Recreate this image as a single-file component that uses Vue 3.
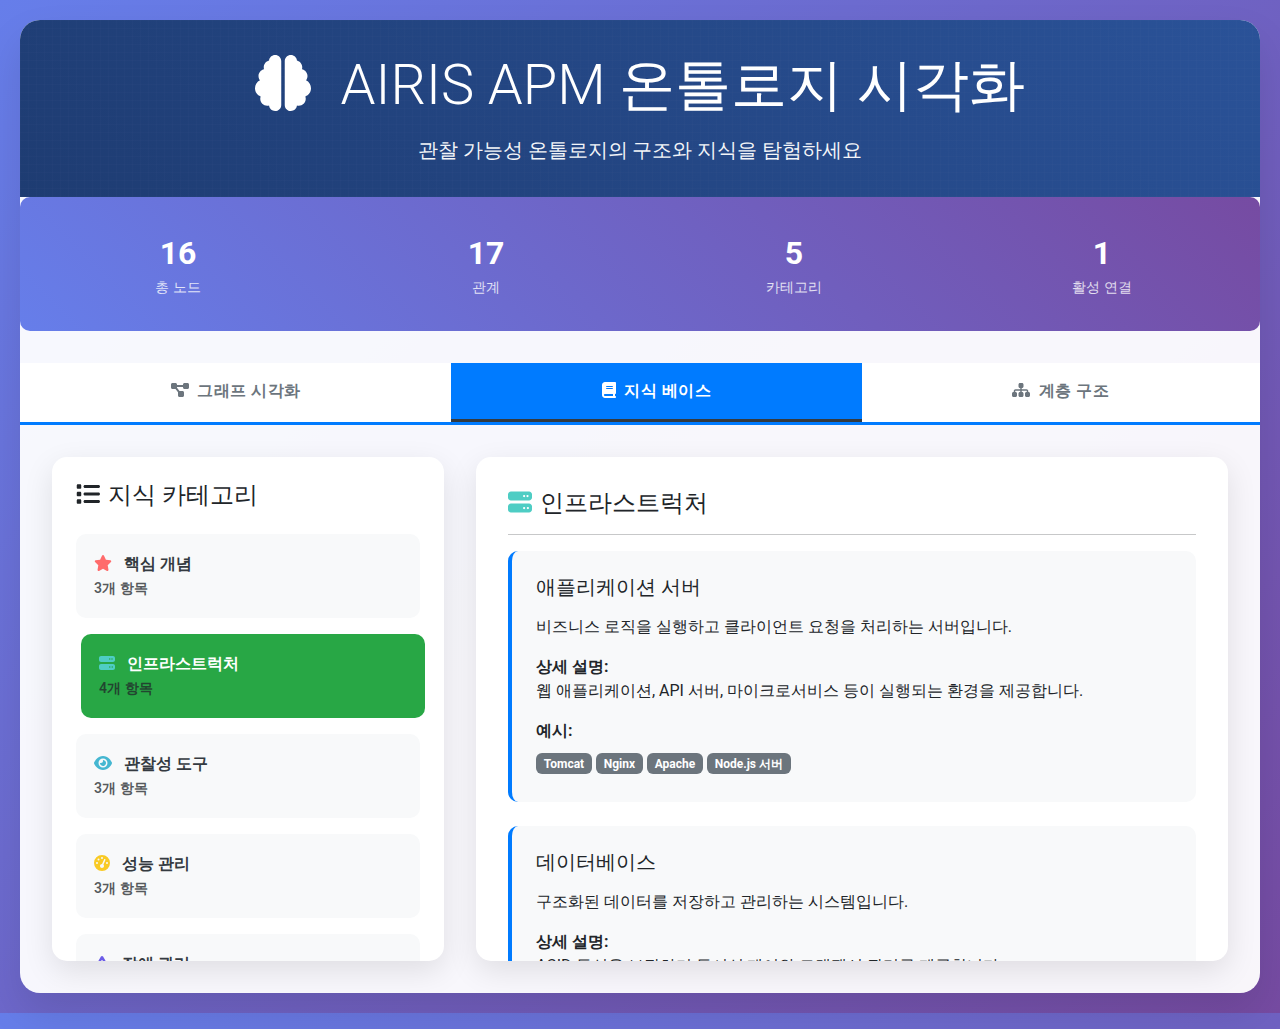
<script setup>
const stats = [
  { value: 16, label: '총 노드' },
  { value: 17, label: '관계' },
  { value: 5, label: '카테고리' },
  { value: 1, label: '활성 연결' },
]

const icons = {
  brain: { w: 512, d: 'M184 0c30.9 0 56 25.1 56 56V456c0 30.9-25.1 56-56 56c-28.9 0-52.7-21.9-55.7-50.1c-5.2 1.4-10.7 2.1-16.3 2.1c-35.3 0-64-28.7-64-64c0-7.4 1.3-14.6 3.6-21.2C21.4 367.4 0 338.2 0 304c0-31.9 18.7-59.5 45.8-72.3C37.1 220.8 32 207 32 192c0-30.7 21.6-56.3 50.4-62.6C80.8 123.9 80 118 80 112c0-29.9 20.6-55.1 48.3-62.1C131.3 21.9 155.1 0 184 0zM328 0c28.9 0 52.6 21.9 55.7 49.9c27.8 7 48.3 32.1 48.3 62.1c0 6-.8 11.9-2.4 17.4c28.8 6.2 50.4 31.9 50.4 62.6c0 15-5.1 28.8-13.8 39.7C493.3 244.5 512 272.1 512 304c0 34.2-21.4 63.4-51.6 74.8c2.3 6.6 3.6 13.8 3.6 21.2c0 35.3-28.7 64-64 64c-5.6 0-11.1-.7-16.3-2.1c-3 28.2-26.8 50.1-55.7 50.1c-30.9 0-56-25.1-56-56V56c0-30.9 25.1-56 56-56z' },
  diagram: { w: 576, d: 'M0 80C0 53.5 21.5 32 48 32h96c26.5 0 48 21.5 48 48V96H384V80c0-26.5 21.5-48 48-48h96c26.5 0 48 21.5 48 48v96c0 26.5-21.5 48-48 48H432c-26.5 0-48-21.5-48-48V160H192v16c0 1.7-.1 3.4-.3 5L272 288h96c26.5 0 48 21.5 48 48v96c0 26.5-21.5 48-48 48H272c-26.5 0-48-21.5-48-48V336c0-1.7 .1-3.4 .3-5L144 224H48c-26.5 0-48-21.5-48-48V80z' },
  book: { w: 448, d: 'M96 0C43 0 0 43 0 96V416c0 53 43 96 96 96H384h32c17.7 0 32-14.3 32-32s-14.3-32-32-32V384c17.7 0 32-14.3 32-32V32c0-17.7-14.3-32-32-32H384 96zm0 384H352v64H96c-17.7 0-32-14.3-32-32s14.3-32 32-32zm32-240c0-8.8 7.2-16 16-16H336c8.8 0 16 7.2 16 16s-7.2 16-16 16H144c-8.8 0-16-7.2-16-16zm16 48H336c8.8 0 16 7.2 16 16s-7.2 16-16 16H144c-8.8 0-16-7.2-16-16s7.2-16 16-16z' },
  sitemap: { w: 576, d: 'M208 80c0-26.5 21.5-48 48-48h64c26.5 0 48 21.5 48 48v64c0 26.5-21.5 48-48 48h-8v40H464c30.9 0 56 25.1 56 56v32h8c26.5 0 48 21.5 48 48v64c0 26.5-21.5 48-48 48H464c-26.5 0-48-21.5-48-48V368c0-26.5 21.5-48 48-48h8V288c0-4.4-3.6-8-8-8H312v40h8c26.5 0 48 21.5 48 48v64c0 26.5-21.5 48-48 48H256c-26.5 0-48-21.5-48-48V368c0-26.5 21.5-48 48-48h8V280H112c-4.4 0-8 3.6-8 8v32h8c26.5 0 48 21.5 48 48v64c0 26.5-21.5 48-48 48H48c-26.5 0-48-21.5-48-48V368c0-26.5 21.5-48 48-48h8V288c0-30.9 25.1-56 56-56H264V192h-8c-26.5 0-48-21.5-48-48V80z' },
  list: { w: 512, d: 'M40 48C26.7 48 16 58.7 16 72v48c0 13.3 10.7 24 24 24H88c13.3 0 24-10.7 24-24V72c0-13.3-10.7-24-24-24H40zM192 64c-17.7 0-32 14.3-32 32s14.3 32 32 32H480c17.7 0 32-14.3 32-32s-14.3-32-32-32H192zm0 160c-17.7 0-32 14.3-32 32s14.3 32 32 32H480c17.7 0 32-14.3 32-32s-14.3-32-32-32H192zm0 160c-17.7 0-32 14.3-32 32s14.3 32 32 32H480c17.7 0 32-14.3 32-32s-14.3-32-32-32H192zM16 232v48c0 13.3 10.7 24 24 24H88c13.3 0 24-10.7 24-24V232c0-13.3-10.7-24-24-24H40c-13.3 0-24 10.7-24 24zM40 368c-13.3 0-24 10.7-24 24v48c0 13.3 10.7 24 24 24H88c13.3 0 24-10.7 24-24V392c0-13.3-10.7-24-24-24H40z' },
  star: { w: 576, d: 'M316.9 18C311.6 7 300.4 0 288.1 0s-23.4 7-28.8 18L195 150.3 51.4 171.5c-12 1.8-22 10.2-25.7 21.7s-.7 24.2 7.9 32.7L137.8 329 113.2 474.7c-2 12 3 24.2 12.9 31.3s23 8 33.8 2.3l128.3-68.5 128.3 68.5c10.8 5.7 23.9 4.9 33.8-2.3s14.9-19.3 12.9-31.3L438.5 329 542.7 225.9c8.6-8.5 11.7-21.2 7.9-32.7s-13.7-19.9-25.7-21.7L381.2 150.3 316.9 18z' },
  server: { w: 512, d: 'M64 32C28.7 32 0 60.7 0 96v64c0 35.3 28.7 64 64 64H448c35.3 0 64-28.7 64-64V96c0-35.3-28.7-64-64-64H64zm280 72a24 24 0 1 1 0 48 24 24 0 1 1 0-48zm48 24a24 24 0 1 1 48 0 24 24 0 1 1 -48 0zM64 288c-35.3 0-64 28.7-64 64v64c0 35.3 28.7 64 64 64H448c35.3 0 64-28.7 64-64V352c0-35.3-28.7-64-64-64H64zm280 72a24 24 0 1 1 0 48 24 24 0 1 1 0-48zm56 24a24 24 0 1 1 48 0 24 24 0 1 1 -48 0z' },
  eye: { w: 576, d: 'M288 32c-80.8 0-145.5 36.8-192.6 80.6C48.6 156 17.3 208 2.5 243.7c-3.3 7.9-3.3 16.7 0 24.6C17.3 304 48.6 356 95.4 399.4C142.5 443.2 207.2 480 288 480s145.5-36.8 192.6-80.6c46.8-43.5 78.1-95.4 93-131.1c3.3-7.9 3.3-16.7 0-24.6c-14.9-35.7-46.2-87.7-93-131.1C433.5 68.8 368.8 32 288 32zM144 256a144 144 0 1 1 288 0 144 144 0 1 1 -288 0zm144-64c0 35.3-28.7 64-64 64c-7.1 0-13.9-1.2-20.3-3.3c-5.5-1.8-11.9 1.6-11.7 7.4c.3 6.9 1.3 13.8 3.2 20.7c13.7 51.2 66.4 81.6 117.6 67.9s81.6-66.4 67.9-117.6c-11.1-41.5-47.8-69.4-88.6-71.1c-5.8-.2-9.2 6.1-7.4 11.7c2.1 6.4 3.3 13.2 3.3 20.3z' },
  gauge: { w: 512, d: 'M0 256a256 256 0 1 1 512 0A256 256 0 1 1 0 256zM288 96a32 32 0 1 0 -64 0 32 32 0 1 0 64 0zM256 416c35.3 0 64-28.7 64-64c0-17.4-6.9-33.1-18.1-44.6L366 161.7c5.3-12.1-.2-26.3-12.3-31.6s-26.3 .2-31.6 12.3L257.9 288c-.6 0-1.3 0-1.9 0c-35.3 0-64 28.7-64 64s28.7 64 64 64zM176 144a32 32 0 1 0 -64 0 32 32 0 1 0 64 0zM96 288a32 32 0 1 0 0-64 32 32 0 1 0 0 64zm352-32a32 32 0 1 0 -64 0 32 32 0 1 0 64 0z' },
  warning: { w: 512, d: 'M256 32c14.2 0 27.3 7.5 34.5 19.8l216 368c7.3 12.4 7.3 27.7 .2 40.1S486.3 480 472 480H40c-14.3 0-27.6-7.7-34.7-20.1s-7-27.8 .2-40.1l216-368C228.7 39.5 241.8 32 256 32zm0 128c-13.3 0-24 10.7-24 24V296c0 13.3 10.7 24 24 24s24-10.7 24-24V184c0-13.3-10.7-24-24-24zm32 224a32 32 0 1 0 -64 0 32 32 0 1 0 64 0z' },
}

const tabs = [
  { label: '그래프 시각화', icon: icons.diagram },
  { label: '지식 베이스', icon: icons.book, active: true },
  { label: '계층 구조', icon: icons.sitemap },
]

const categories = [
  { name: '핵심 개념', count: 3, icon: icons.star, color: '#ff6b6b' },
  { name: '인프라스트럭처', count: 4, icon: icons.server, color: '#4ecdc4', active: true },
  { name: '관찰성 도구', count: 3, icon: icons.eye, color: '#45b7d1' },
  { name: '성능 관리', count: 3, icon: icons.gauge, color: '#f9ca24' },
  { name: '장애 관리', count: 3, icon: icons.warning, color: '#6c5ce7' },
]

const entries = [
  {
    title: '애플리케이션 서버',
    summary: '비즈니스 로직을 실행하고 클라이언트 요청을 처리하는 서버입니다.',
    detail: '웹 애플리케이션, API 서버, 마이크로서비스 등이 실행되는 환경을 제공합니다.',
    examples: ['Tomcat', 'Nginx', 'Apache', 'Node.js 서버'],
  },
  {
    title: '데이터베이스',
    summary: '구조화된 데이터를 저장하고 관리하는 시스템입니다.',
    detail: 'ACID 특성을 보장하며 동시성 제어와 트랜잭션 관리를 제공합니다.',
  },
]
</script>

<template>
  <div class="page" lang="ko">
    <main class="shell">
      <header class="hero">
        <h1>
          <svg class="icon brain" :viewBox="`0 0 ${icons.brain.w} 512`"><path :d="icons.brain.d" /></svg>
          AIRIS APM 온톨로지 시각화
        </h1>
        <p>관찰 가능성 온톨로지의 구조와 지식을 탐험하세요</p>
      </header>

      <section class="stats">
        <div v-for="s in stats" :key="s.label" class="stat">
          <div class="value">{{ s.value }}</div>
          <div class="label">{{ s.label }}</div>
        </div>
      </section>

      <nav class="tabs">
        <button v-for="t in tabs" :key="t.label" class="tab" :class="{ active: t.active }">
          <svg class="icon" :viewBox="`0 0 ${t.icon.w} 512`"><path :d="t.icon.d" /></svg><span>{{ t.label }}</span>
        </button>
      </nav>

      <div class="content">
        <aside class="panel sidebar">
          <h4><svg class="icon" viewBox="0 0 512 512"><path :d="icons.list.d" /></svg><span>지식 카테고리</span></h4>
          <div v-for="c in categories" :key="c.name" class="category" :class="{ active: c.active }">
            <div class="name">
              <svg class="icon" :viewBox="`0 0 ${c.icon.w} 512`" :style="{ color: c.color }"><path :d="c.icon.d" /></svg>
              {{ c.name }}
            </div>
            <div class="count"><small>{{ c.count }}개 항목</small></div>
          </div>
        </aside>

        <section class="panel detail">
          <h4><svg class="icon teal" viewBox="0 0 512 512"><path :d="icons.server.d" /></svg><span>인프라스트럭처</span></h4>
          <hr />
          <article v-for="e in entries" :key="e.title" class="entry">
            <h5>{{ e.title }}</h5>
            <p>{{ e.summary }}</p>
            <p><strong>상세 설명:</strong><br />{{ e.detail }}</p>
            <template v-if="e.examples">
              <div><strong>예시:</strong></div>
              <div class="badges">
                <span v-for="x in e.examples" :key="x" class="badge">{{ x }}</span>
              </div>
            </template>
          </article>
        </section>
      </div>
    </main>
  </div>
</template>

<style>
html {
  background: linear-gradient(135deg, #667eea 0%, #764ba2 100%);
  background-size: 100% 1013px;
}
body {
  margin: 0;
  height: 1029px;
  overflow: hidden;
}
</style>

<style scoped>
.page {
  box-sizing: border-box;
  height: 1013px;
  padding: 20px;
  font-family: Roboto, sans-serif;
  font-size: 16px;
  line-height: 1.5;
  color: #212529;
}
.page * {
  box-sizing: border-box;
}
h1, h4, h5, p {
  margin: 0;
  font-weight: 400;
}
.icon {
  height: 1em;
  fill: currentColor;
  vertical-align: -0.125em;
  overflow: visible;
}
.shell {
  height: 973px;
  border-radius: 20px;
  overflow: hidden;
  background: rgba(255, 255, 255, 0.95);
  box-shadow: 0 20px 40px rgba(0, 0, 0, 0.1);
}
.hero {
  height: 177.2px;
  padding: 32px;
  text-align: center;
  color: #fff;
  background:
    repeating-linear-gradient(90deg, rgba(255, 255, 255, 0.01) 0 1px, transparent 1px 8px),
    repeating-linear-gradient(0deg, rgba(255, 255, 255, 0.01) 0 1px, transparent 1px 8px),
    linear-gradient(45deg, #1e3c72, #2a5298);
}
.hero h1 {
  font-size: 56px;
  font-weight: 300;
  line-height: 1.2;
  margin-bottom: 16px;
}
.brain {
  margin-right: 16px;
}
.hero p {
  font-size: 20px;
  font-weight: 300;
  opacity: 0.95;
}
.stats {
  display: flex;
  padding: 32px 4px;
  border-radius: 10px;
  background: linear-gradient(45deg, #667eea, #764ba2);
  color: #fff;
  text-align: center;
}
.stat {
  flex: 1;
}
.value {
  font-size: 32px;
  font-weight: 700;
}
.label {
  font-size: 14.4px;
  opacity: 0.8;
}
.tabs {
  display: flex;
  margin-top: 32px;
  background: #fff;
  border-bottom: 3px solid #007bff;
}
.tab {
  flex: 1 1 auto;
  padding: 16px 32px;
  border: 0;
  border-bottom: 3px solid transparent;
  background: transparent;
  color: #6c757d;
  font: inherit;
  font-weight: 600;
  letter-spacing: 0.5px;
}
.tab .icon {
  margin-right: 8.5px;
}
.tab.active {
  color: #fff;
  background: #007bff;
  border-bottom-color: #343a40;
}
.content {
  display: flex;
  gap: 32px;
  padding: 32px;
}
.panel {
  height: 504px;
  border-radius: 15px;
  overflow: hidden;
  background: #fff;
  box-shadow: 0 10px 30px rgba(0, 0, 0, 0.1);
}
.panel h4 {
  font-size: 24px;
  font-weight: 500;
  line-height: 1.2;
}
.panel h4 .icon {
  margin-right: 8px;
}
.sidebar {
  width: 392px;
  padding: 24px;
}
.sidebar h4 {
  margin-bottom: 24px;
}
.category {
  margin-bottom: 16px;
  padding: 16px;
  border: 2px solid transparent;
  border-radius: 10px;
  background: #f8f9fa;
  color: #343a40;
  font-weight: 600;
}
.category.active {
  background: #28a745;
  color: #fff;
  transform: translateX(5px);
}
.category .icon {
  margin-right: 8px;
}
.count small {
  font-size: 14px;
  letter-spacing: 0.15px;
  color: rgba(33, 37, 41, 0.75);
}
.detail {
  flex: 1;
  padding: 32px;
}
.teal {
  color: #4ecdc4;
}
hr {
  margin: 16px 0;
  border: 0;
  border-top: 1px solid rgba(33, 37, 41, 0.25);
}
.entry {
  height: 251px;
  margin-bottom: 24px;
  padding: 24px;
  border-left: 4px solid #007bff;
  border-radius: 10px;
  background: #f8f9fa;
}
.entry h5 {
  margin-bottom: 16px;
  font-size: 20px;
  font-weight: 500;
  line-height: 1.2;
}
.entry p {
  margin-bottom: 16px;
}
strong {
  font-weight: 700;
}
.badges {
  display: flex;
  gap: 4px;
  margin-top: 10.6px;
}
.badge {
  padding: 4.8px 7.8px 3.6px;
  border-radius: 6px;
  background: #6c757d;
  color: #fff;
  font-size: 12px;
  font-weight: 700;
  line-height: 1;
}
</style>
